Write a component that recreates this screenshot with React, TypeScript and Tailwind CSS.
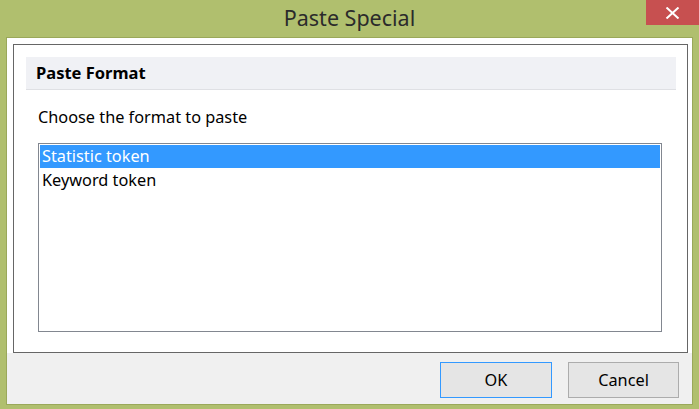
export default function App() {
  const font = { fontFamily: '"Noto Sans", "Open Sans", sans-serif' };
  return (
    <div className="w-[699px] h-[409px] bg-[#b0bf6e] flex flex-col text-black" style={font}>
      {/* Title bar */}
      <div className="relative h-[37px] flex items-center justify-center shrink-0">
        <span className="text-[21.5px] leading-none text-[#2b2b2b] -mt-[2px]">Paste Special</span>
        <button className="absolute top-0 right-0 w-[53px] h-[25px] bg-[#c75050] flex items-center justify-center">
          <svg width="15" height="12" viewBox="0 0 15 12">
            <path d="M1.5 0.5 L13.5 11.5 M13.5 0.5 L1.5 11.5" stroke="white" strokeWidth="2" />
          </svg>
        </button>
      </div>

      {/* Window body */}
      <div className="flex-1 mx-[6px] mb-[4px] border border-[#9aa85a] flex flex-col">
        <div className="bg-white pt-[6px] pl-[6px] pr-[4px] pb-0">
          <div className="border border-[#666666] h-[309px] pt-[12px] pl-[12px] pr-[11px] flex flex-col">
            <div className="h-[33px] bg-[#f0f1f5] border-b border-[#dfe0e4] flex items-center pl-[10px]">
              <span className="text-[16.5px] font-bold leading-none">Paste Format</span>
            </div>
            <div className="pl-[12px] pt-[19px] text-[16.3px] leading-[16px]">Choose the format to paste</div>
            <div className="ml-[12px] mr-[14px] mt-[18px] h-[189px] border border-[#828790] p-[1px] text-[16.3px]">
              <div className="h-[23px] bg-[#3399ff] text-white flex items-center pl-[2px]">Statistic token</div>
              <div className="h-[24px] flex items-center pl-[2px]">Keyword token</div>
            </div>
          </div>
        </div>
        <div className="flex-1 bg-[#f0f0f0] flex justify-end items-start pt-[9px] pr-[13px] gap-[16px]">
          <button className="w-[112px] h-[36px] border border-[#3399ff] bg-[#e5e5e5] text-[16.3px]">OK</button>
          <button className="w-[111px] h-[36px] border border-[#acacac] bg-[#e5e5e5] text-[16.3px]">Cancel</button>
        </div>
      </div>
    </div>
  );
}
